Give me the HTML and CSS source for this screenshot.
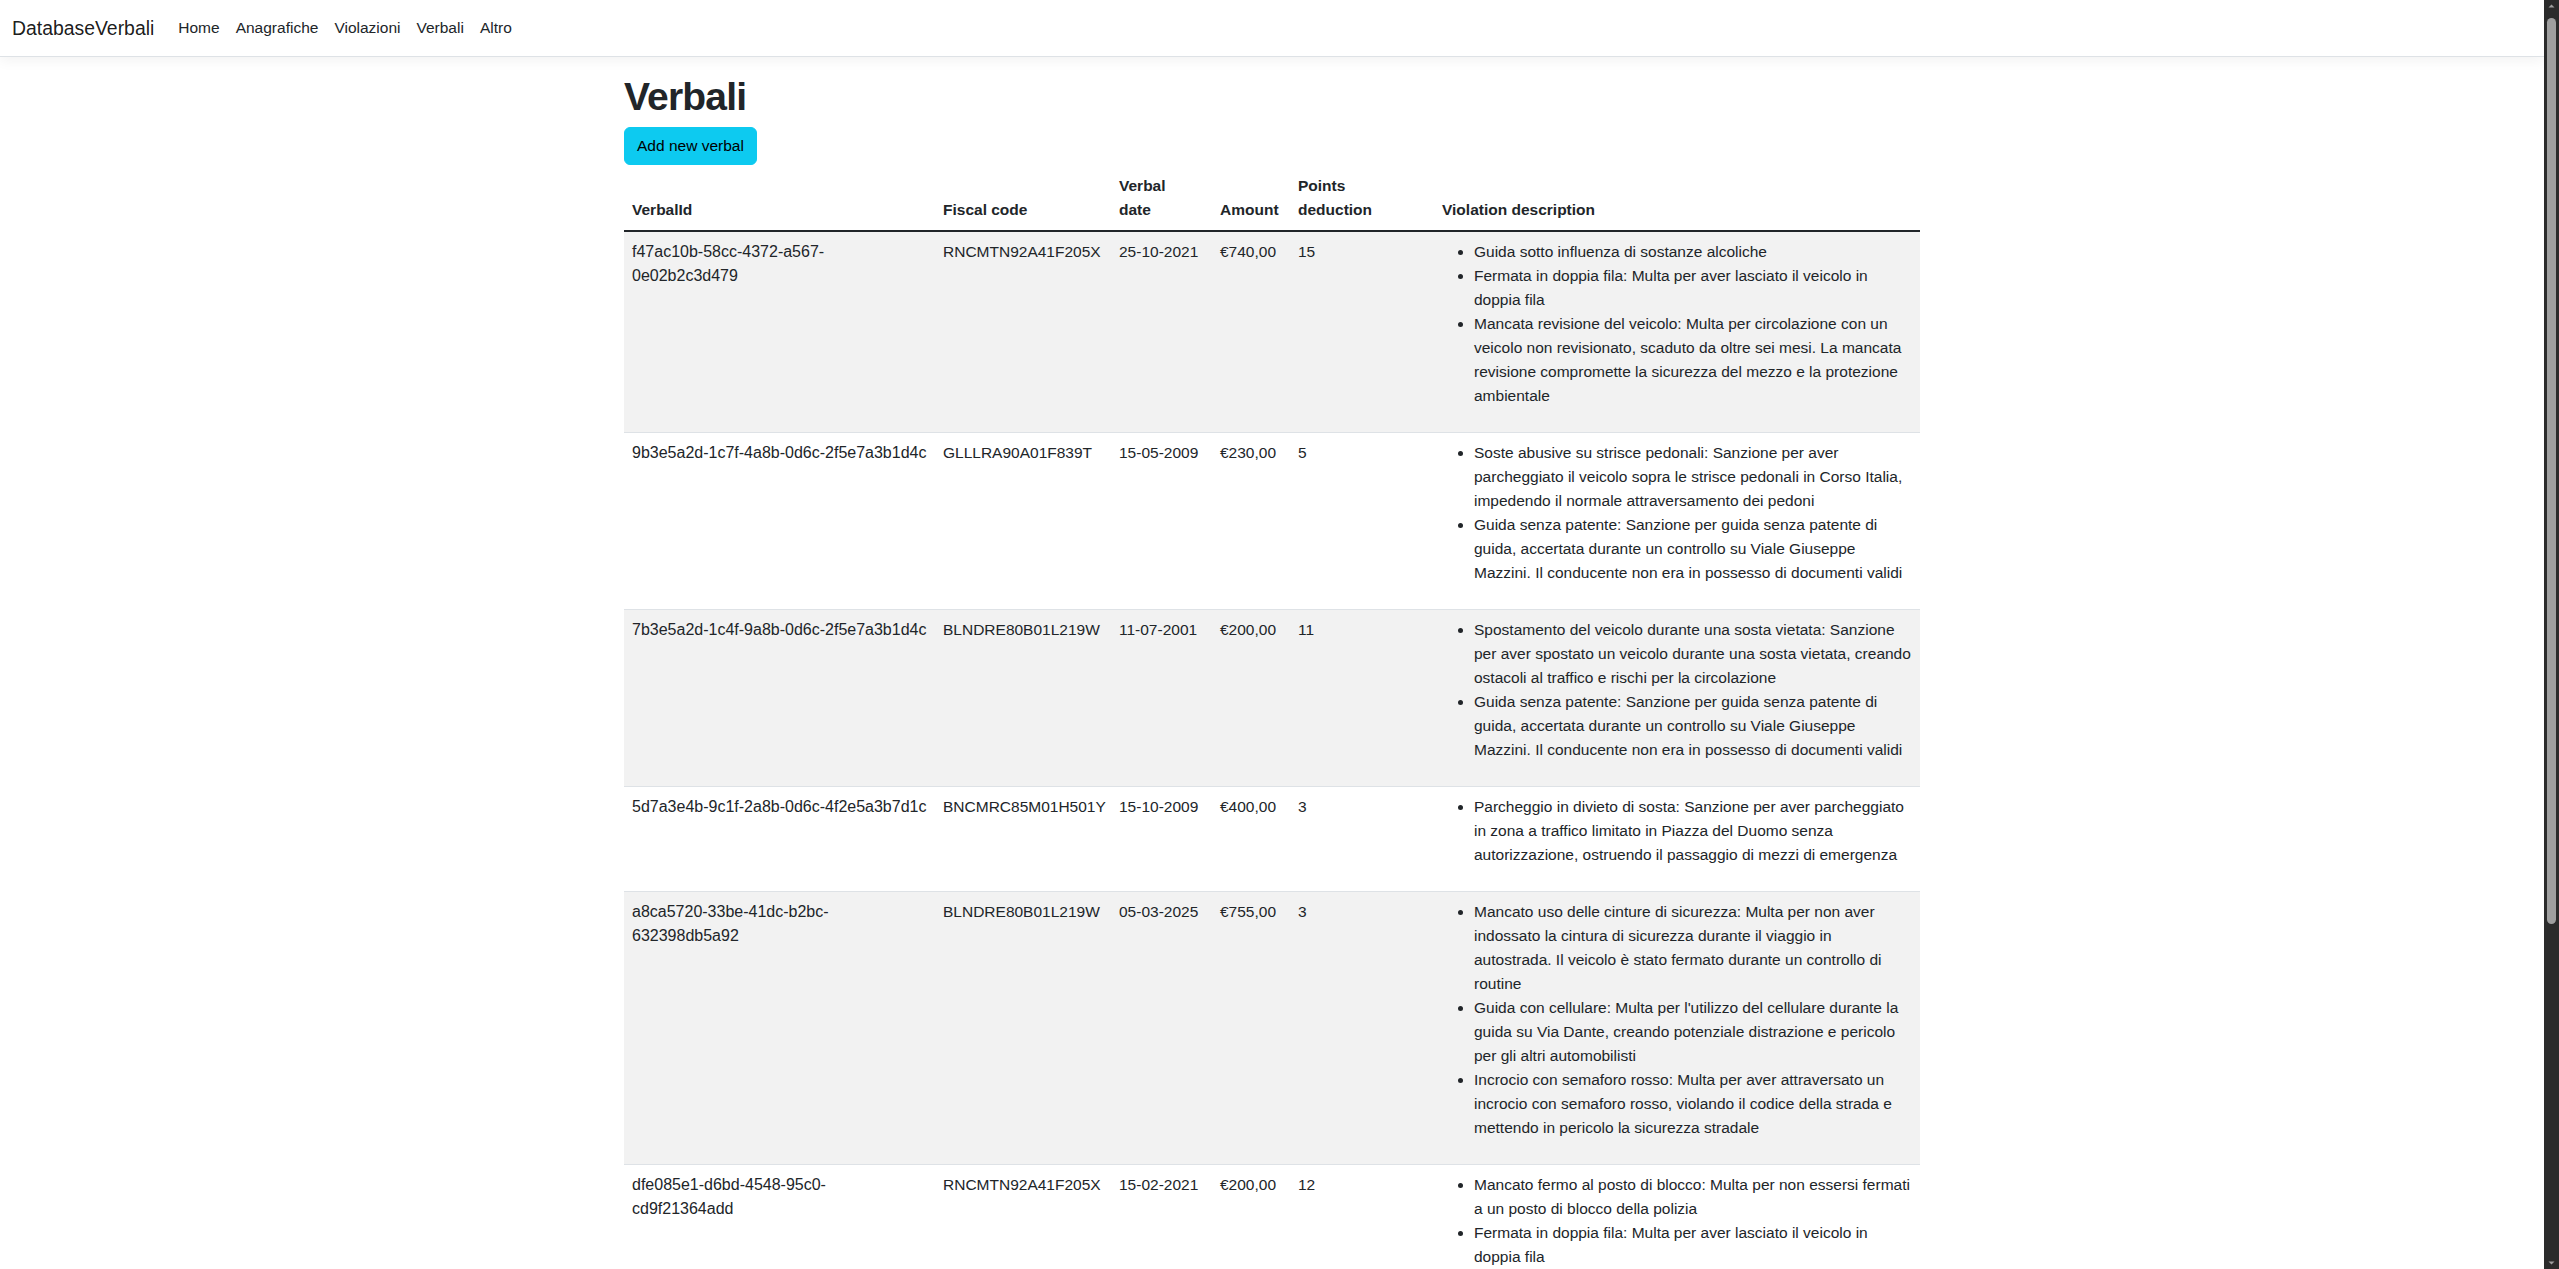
FILE: index.html
```html
<!DOCTYPE html>
<html lang="it">
<head>
<meta charset="utf-8">
<title>Verbali - DatabaseVerbali</title>
<link rel="stylesheet" href="styles.css">
</head>
<body>
<div class="page">
  <header>
    <nav class="navbar">
      <a class="brand" href="#">DatabaseVerbali</a>
      <ul class="nav">
        <li><a class="nav-link" href="#">Home</a></li>
        <li><a class="nav-link" href="#">Anagrafiche</a></li>
        <li><a class="nav-link" href="#">Violazioni</a></li>
        <li><a class="nav-link" href="#">Verbali</a></li>
        <li><a class="nav-link" href="#">Altro</a></li>
      </ul>
    </nav>
  </header>
  <main class="container">
    <h1 class="title">Verbali</h1>
    <div class="actions"><a class="btn-info" href="#">Add new verbal</a></div>
    <table class="table">
      <colgroup>
        <col class="c-id"><col class="c-fc"><col class="c-date"><col class="c-amt"><col class="c-pts"><col class="c-desc">
      </colgroup>
      <thead>
        <tr>
          <th>VerbalId</th>
          <th>Fiscal code</th>
          <th>Verbal<br>date</th>
          <th>Amount</th>
          <th>Points<br>deduction</th>
          <th>Violation description</th>
        </tr>
      </thead>
      <tbody>
        <tr>
          <td class="id">f47ac10b-58cc-4372-a567-0e02b2c3d479</td>
          <td>RNCMTN92A41F205X</td>
          <td>25-10-2021</td>
          <td>€740,00</td>
          <td>15</td>
          <td><ul class="desc">
            <li>Guida sotto influenza di sostanze alcoliche</li>
            <li>Fermata in doppia fila: Multa per aver lasciato il veicolo in doppia fila</li>
            <li>Mancata revisione del veicolo: Multa per circolazione con un veicolo non revisionato, scaduto da oltre sei mesi. La mancata revisione compromette la sicurezza del mezzo e la protezione ambientale</li>
          </ul></td>
        </tr>
        <tr>
          <td class="id">9b3e5a2d-1c7f-4a8b-0d6c-2f5e7a3b1d4c</td>
          <td>GLLLRA90A01F839T</td>
          <td>15-05-2009</td>
          <td>€230,00</td>
          <td>5</td>
          <td><ul class="desc">
            <li>Soste abusive su strisce pedonali: Sanzione per aver parcheggiato il veicolo sopra le strisce pedonali in Corso Italia, impedendo il normale attraversamento dei pedoni</li>
            <li>Guida senza patente: Sanzione per guida senza patente di guida, accertata durante un controllo su Viale Giuseppe Mazzini. Il conducente non era in possesso di documenti validi</li>
          </ul></td>
        </tr>
        <tr>
          <td class="id">7b3e5a2d-1c4f-9a8b-0d6c-2f5e7a3b1d4c</td>
          <td>BLNDRE80B01L219W</td>
          <td>11-07-2001</td>
          <td>€200,00</td>
          <td>11</td>
          <td><ul class="desc">
            <li>Spostamento del veicolo durante una sosta vietata: Sanzione per aver spostato un veicolo durante una sosta vietata, creando ostacoli al traffico e rischi per la circolazione</li>
            <li>Guida senza patente: Sanzione per guida senza patente di guida, accertata durante un controllo su Viale Giuseppe Mazzini. Il conducente non era in possesso di documenti validi</li>
          </ul></td>
        </tr>
        <tr>
          <td class="id">5d7a3e4b-9c1f-2a8b-0d6c-4f2e5a3b7d1c</td>
          <td>BNCMRC85M01H501Y</td>
          <td>15-10-2009</td>
          <td>€400,00</td>
          <td>3</td>
          <td><ul class="desc">
            <li>Parcheggio in divieto di sosta: Sanzione per aver parcheggiato in zona a traffico limitato in Piazza del Duomo senza autorizzazione, ostruendo il passaggio di mezzi di emergenza</li>
          </ul></td>
        </tr>
        <tr>
          <td class="id">a8ca5720-33be-41dc-b2bc-632398db5a92</td>
          <td>BLNDRE80B01L219W</td>
          <td>05-03-2025</td>
          <td>€755,00</td>
          <td>3</td>
          <td><ul class="desc">
            <li>Mancato uso delle cinture di sicurezza: Multa per non aver indossato la cintura di sicurezza durante il viaggio in autostrada. Il veicolo è stato fermato durante un controllo di routine</li>
            <li>Guida con cellulare: Multa per l'utilizzo del cellulare durante la guida su Via Dante, creando potenziale distrazione e pericolo per gli altri automobilisti</li>
            <li>Incrocio con semaforo rosso: Multa per aver attraversato un incrocio con semaforo rosso, violando il codice della strada e mettendo in pericolo la sicurezza stradale</li>
          </ul></td>
        </tr>
        <tr>
          <td class="id">dfe085e1-d6bd-4548-95c0-cd9f21364add</td>
          <td>RNCMTN92A41F205X</td>
          <td>15-02-2021</td>
          <td>€200,00</td>
          <td>12</td>
          <td><ul class="desc">
            <li>Mancato fermo al posto di blocco: Multa per non essersi fermati a un posto di blocco della polizia</li>
            <li>Fermata in doppia fila: Multa per aver lasciato il veicolo in doppia fila</li>
          </ul></td>
        </tr>
      </tbody>
    </table>
  </main>
</div>
<div class="scrollbar" aria-hidden="true">
  <svg class="sb-arrow" width="15" height="12" viewBox="0 0 15 12"><path d="M4.5 7.5 L7.5 4.5 L10.5 7.5 Z" fill="#9f9f9f"/></svg>
  <div class="sb-thumb"></div>
  <div class="sb-rest"></div>
  <svg class="sb-arrow" width="15" height="12" viewBox="0 0 15 12"><path d="M4.5 4.5 L7.5 7.5 L10.5 4.5 Z" fill="#9f9f9f"/></svg>
</div>
</body>
</html>
```

FILE: styles.css
```css
* { box-sizing: border-box; }

html, body {
  margin: 0;
  height: 100%;
}

body {
  display: flex;
  overflow: hidden;
  background: #fff;
  color: #212529;
  font-family: "Liberation Sans", Arial, sans-serif;
  font-size: 15.5px;
  line-height: 24px;
}

.page {
  flex: 1;
  min-width: 0;
  height: 100%;
  overflow: hidden;
}

/* Navbar */
.navbar {
  display: flex;
  align-items: center;
  padding: 8px 12px;
  background: #fff;
  border-bottom: 1px solid #dee2e6;
  box-shadow: 0 4px 12px rgba(0, 0, 0, 0.05);
  margin-bottom: 16px;
}

.brand {
  font-size: 19.4px;
  line-height: 30px;
  padding: 5px 0;
  margin-right: 16px;
  color: rgba(0, 0, 0, 0.9);
  text-decoration: none;
}

.nav {
  display: flex;
  list-style: none;
  margin: 0;
  padding: 0;
}

.nav-link {
  display: block;
  padding: 8px;
  color: #212529;
  text-decoration: none;
}

/* Main */
.container {
  max-width: 1320px;
  margin: 0 auto;
  padding: 0 12px 16px;
}

.title {
  font-size: 39px;
  font-weight: 700;
  letter-spacing: -0.8px;
  line-height: 48px;
  margin: 2px 0 6px;
}

.actions {
  display: flex;
}

.btn-info {
  display: inline-block;
  padding: 6px 12px;
  border: 1px solid #0dcaf0;
  border-radius: 6px;
  background: #0dcaf0;
  color: #000;
  text-decoration: none;
  line-height: 24px;
}

/* Table */
.table {
  width: 100%;
  table-layout: fixed;
  border-collapse: collapse;
  margin-top: 1px;
  vertical-align: top;
}

.c-id { width: 311px; }
.c-fc { width: 176px; }
.c-date { width: 101px; }
.c-amt { width: 78px; }
.c-pts { width: 144px; }
.c-desc { width: 486px; }

.table th,
.table td {
  padding: 8px;
  text-align: left;
  border-bottom: 1px solid #dee2e6;
}

.table thead th {
  vertical-align: bottom;
  font-weight: 700;
  border-bottom: 2px solid #212529;
}

.table td { vertical-align: top; }

.table tbody tr:nth-child(odd) td {
  background: #f2f2f2;
}

.table td.id {
  font-size: 16px;
}

.desc {
  margin: 0 0 16px;
  padding-left: 32px;
}

/* Fake window scrollbar */
.scrollbar {
  flex: none;
  width: 15px;
  height: 100%;
  background: #2b2b2b;
  display: flex;
  flex-direction: column;
  align-items: center;
}

.sb-arrow {
  flex: none;
  display: block;
}

.sb-thumb {
  flex: none;
  width: 9px;
  height: 906px;
  margin-top: 6px;
  border-radius: 5px;
  background: #9f9f9f;
}

.sb-rest { flex: 1; }
```
